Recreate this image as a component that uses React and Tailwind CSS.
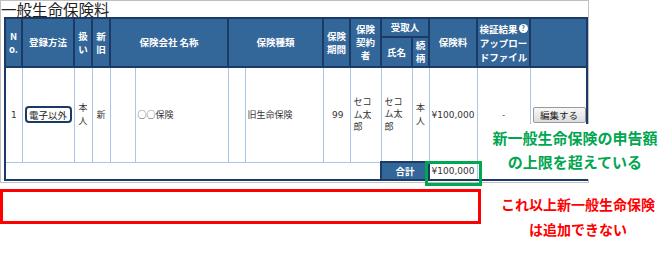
import React from "react";

const th = "border-2 border-[#1c3a66] bg-[#336699] text-white font-bold text-[9.5px] leading-[13px] text-center align-middle p-0";
const td = "border border-[#a9c5e8] text-[9px] leading-[12.5px] text-[#333] align-middle p-0";

export default function App() {
  return (
    <div className="relative w-[670px] h-[259px] bg-white overflow-hidden font-['Noto_Sans_CJK_JP',sans-serif]">
      <div className="w-[589px] h-[183px] border border-[#c0c0c0] pl-[3px]">
        <div className="-ml-[3px] text-[15.5px] leading-[16px] text-[#222] bg-white w-fit pr-[2px]">一般生命保険料</div>
        <table className="border-collapse table-fixed w-[584px] border-2 border-[#1c3a66]">
          <colgroup>
            <col className="w-[17px]" />
            <col className="w-[52px]" />
            <col className="w-[18px]" />
            <col className="w-[18px]" />
            <col className="w-[25px]" />
            <col className="w-[93px]" />
            <col className="w-[17px]" />
            <col className="w-[78px]" />
            <col className="w-[27px]" />
            <col className="w-[31px]" />
            <col className="w-[31px]" />
            <col className="w-[17px]" />
            <col className="w-[48px]" />
            <col className="w-[53px]" />
            <col className="w-[57px]" />
          </colgroup>
          <thead>
            <tr className="h-[19px]">
              <th rowSpan={2} className={th}>N<br />o.</th>
              <th rowSpan={2} className={th}>登録方法</th>
              <th rowSpan={2} className={th}>扱<br />い</th>
              <th rowSpan={2} className={th}>新<br />旧</th>
              <th rowSpan={2} colSpan={2} className={th}>保険会社 名称</th>
              <th rowSpan={2} colSpan={2} className={th}>保険種類</th>
              <th rowSpan={2} className={th}>保険<br />期間</th>
              <th rowSpan={2} className={th}>保険<br />契約<br />者</th>
              <th colSpan={2} className={th}>受取人</th>
              <th rowSpan={2} className={th}>保険料</th>
              <th rowSpan={2} className={th + " leading-[14px]"}>
                <span className="inline-flex items-center">
                  検証結果
                  <span className="ml-[1px] inline-flex items-center justify-center w-[9px] h-[9px] rounded-full bg-white text-[#336699] text-[7px] leading-none font-bold">?</span>
                </span>
                <br />アップロー<br />ドファイル
              </th>
              <th rowSpan={2} className={th}></th>
            </tr>
            <tr className="h-[30px]">
              <th className={th}>氏名</th>
              <th className={th}>続<br />柄</th>
            </tr>
          </thead>
          <tbody>
            <tr className="h-[95px]">
              <td className={td + " text-center font-['DejaVu_Sans',sans-serif]"}>1</td>
              <td className={td + " text-center"}>
                <span className="inline-flex items-center justify-center w-[47px] h-[17px] border-2 border-[#1c3a66] rounded-[4px] bg-white text-[9.5px] text-[#222]">電子以外</span>
              </td>
              <td className={td + " text-center"}>本<br />人</td>
              <td className={td + " text-center"}>新</td>
              <td className={td}></td>
              <td className={td + " pl-[2px]"}>○○保険</td>
              <td className={td}></td>
              <td className={td + " pl-[2px]"}>旧生命保険</td>
              <td className={td + " text-right pr-[6px] font-['DejaVu_Sans',sans-serif]"}>99</td>
              <td className={td + " pl-[3px]"}>セコ<br />ム太<br />郎</td>
              <td className={td + " pl-[3px]"}>セコ<br />ム太<br />郎</td>
              <td className={td + " text-center"}>本<br />人</td>
              <td className={td + " text-right pr-[2px] font-['DejaVu_Sans',sans-serif]"}>¥100,000</td>
              <td className={td + " text-center"}>-</td>
              <td className={td + " pl-[2px]"}>
                <span className="inline-flex items-center justify-center w-[53px] h-[16px] border border-[#999] rounded-[2px] bg-gradient-to-b from-[#f8f8f8] to-[#dcdcdc] text-[9.5px] text-[#222]">編集する</span>
              </td>
            </tr>
            <tr className="h-[18px]">
              <td colSpan={10} className="border border-[#a9c5e8] border-b-2 border-b-[#1c3a66] border-l-2 border-l-[#1c3a66] p-0"></td>
              <td colSpan={2} className="border-2 border-[#1c3a66] bg-[#336699] text-white font-bold text-[9.5px] text-center p-0">合計</td>
              <td className={td + " text-right pr-[2px] border-b-2 border-b-[#1c3a66] font-['DejaVu_Sans',sans-serif]"}>¥100,000</td>
              <td colSpan={2} className="p-0"></td>
            </tr>
          </tbody>
        </table>
      </div>

      <div className="flex items-start mt-[6px]">
        <div className="w-[481px] h-[35px] border-[3px] border-[#ff0000]"></div>
        <div className="ml-[9px] mt-[3px] w-[176px] text-center text-[#ff0000] font-bold text-[14px] leading-[25px]">
          これ以上新一般生命保険<br />は追加できない
        </div>
      </div>

      <div className="absolute left-[479px] top-[124px] w-[191px] h-[55px] bg-white pt-[2px] text-center text-[#00a650] font-bold text-[15px] leading-[24px] pl-[1px]">
        新一般生命保険の申告額<br />の上限を超えている
      </div>
      <div className="absolute left-[425px] top-[161px] w-[57px] h-[25px] border-[3px] border-[#00a650]"></div>
    </div>
  );
}
